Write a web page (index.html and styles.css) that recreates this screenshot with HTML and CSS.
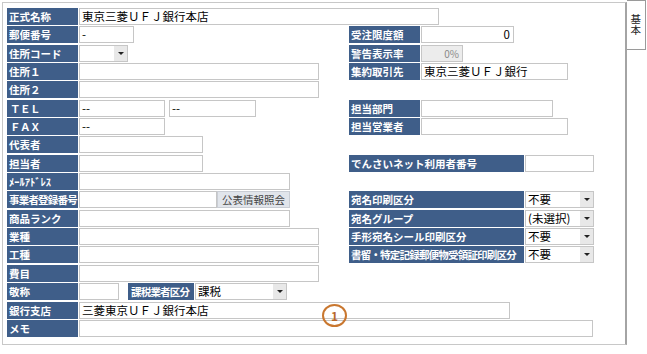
FILE: index.html
```html
<!DOCTYPE html>
<html lang="ja">
<head>
    <meta charset="UTF-8">
    <title>取引先登録 基本</title>
    <link rel="stylesheet" href="styles.css">
</head>
<body>
<div class="screen">
    <div class="panel">
        <div class="row">
            <div class="left full"><span class="lbl">正式名称</span><span class="fld w360">東京三菱ＵＦＪ銀行本店</span></div>
        </div>
        <div class="row">
            <div class="left"><span class="lbl">郵便番号</span><span class="fld w55">-</span></div>
            <div class="right"><span class="lbl">受注限度額</span><span class="fld w93 num">0</span></div>
        </div>
        <div class="row">
            <div class="left"><span class="lbl">住所コード</span><span class="fld sel w49"><span></span><span class="arr"></span></span></div>
            <div class="right"><span class="lbl">警告表示率</span><span class="fld w42 num ro">0%</span></div>
        </div>
        <div class="row">
            <div class="left"><span class="lbl">住所１</span><span class="fld w240"></span></div>
            <div class="right"><span class="lbl">集約取引先</span><span class="fld w147">東京三菱ＵＦＪ銀行</span></div>
        </div>
        <div class="row">
            <div class="left"><span class="lbl">住所２</span><span class="fld w240"></span></div>
        </div>
        <div class="row">
            <div class="left"><span class="lbl wide">ＴＥＬ</span><span class="fld w86">--</span><span class="fld w87 sp">--</span></div>
            <div class="right"><span class="lbl">担当部門</span><span class="fld w132"></span></div>
        </div>
        <div class="row">
            <div class="left"><span class="lbl wide">ＦＡＸ</span><span class="fld w86">--</span></div>
            <div class="right"><span class="lbl">担当営業者</span><span class="fld w147"></span></div>
        </div>
        <div class="row">
            <div class="left"><span class="lbl">代表者</span><span class="fld w124"></span></div>
        </div>
        <div class="row">
            <div class="left"><span class="lbl">担当者</span><span class="fld w124"></span></div>
            <div class="right"><span class="lbl long">でんさいネット利用者番号</span><span class="fld w69"></span></div>
        </div>
        <div class="row">
            <div class="left"><span class="lbl">ﾒｰﾙｱﾄﾞﾚｽ</span><span class="fld w211"></span></div>
        </div>
        <div class="row">
            <div class="left"><span class="lbl tight">事業者登録番号</span><span class="fld w138"></span><span class="btn">公表情報照会</span></div>
            <div class="right"><span class="lbl long">宛名印刷区分</span><span class="fld sel w69"><span>不要</span><span class="arr"></span></span></div>
        </div>
        <div class="row">
            <div class="left"><span class="lbl">商品ランク</span><span class="fld w211"></span></div>
            <div class="right"><span class="lbl long">宛名グループ</span><span class="fld sel w69"><span>(未選択)</span><span class="arr"></span></span></div>
        </div>
        <div class="row">
            <div class="left"><span class="lbl">業種</span><span class="fld w240"></span></div>
            <div class="right"><span class="lbl long">手形宛名シール印刷区分</span><span class="fld sel w69"><span>不要</span><span class="arr"></span></span></div>
        </div>
        <div class="row">
            <div class="left"><span class="lbl">工種</span><span class="fld w240"></span></div>
            <div class="right"><span class="lbl long tight">書留・特定記録郵便物受領証印刷区分</span><span class="fld sel w69"><span>不要</span><span class="arr"></span></span></div>
        </div>
        <div class="row">
            <div class="left"><span class="lbl">費目</span><span class="fld w240"></span></div>
        </div>
        <div class="row">
            <div class="left"><span class="lbl">敬称</span><span class="fld w40"></span><span class="lbl tax tight">課税業者区分</span><span class="fld sel w92"><span>課税</span><span class="arr"></span></span></div>
        </div>
        <div class="row">
            <div class="left full"><span class="lbl">銀行支店</span><span class="fld w431">三菱東京ＵＦＪ銀行本店</span></div>
        </div>
        <div class="row">
            <div class="left full"><span class="lbl">メモ</span><span class="fld w514"></span></div>
        </div>

        <span class="mark">1</span>
    </div>
    <div class="tab"><span class="tab-text">基本</span></div>
</div>
</body>
</html>
```

FILE: styles.css
```css
body {
    margin: 0;
    background: #fff;
    font-family: "Noto Sans CJK JP", "DejaVu Sans", sans-serif;
    color: #000;
}
.screen {
    display: flex;
    align-items: flex-start;
    padding: 2px 0 0 2px;
}
.panel {
    position: relative;
    width: 618px;
    border: 1px solid #c8c8c8;
    border-right: 2px solid #a4a4a4;
    padding: 5px 0 6px 4px;
}
.tab {
    margin-top: -2px;
    width: 19px;
    height: 50px;
    border: 1px solid #9a9a9a;
    border-left: none;
    box-sizing: border-box;
    padding-top: 12px;
    display: flex;
    justify-content: center;
}
.tab-text {
    width: 11px;
    font-size: 10.5px;
    line-height: 11px;
    word-break: break-all;
    color: #222;
}
.row {
    display: flex;
    height: 18.35px;
}
.left {
    display: flex;
    gap: 1px;
    flex: 0 0 342px;
}
.left.full {
    flex: none;
}
.right {
    display: flex;
    gap: 1px;
}
.lbl {
    flex-shrink: 0;
    box-sizing: border-box;
    width: 71px;
    height: 17px;
    padding-left: 2px;
    background: #3f5e89;
    color: #fff;
    font-size: 10.5px;
    font-weight: bold;
    line-height: 17px;
    white-space: nowrap;
    overflow: hidden;
}
.lbl.wide {
    padding-left: 3px;
    letter-spacing: -0.5px;
}
.lbl.tight {
    letter-spacing: -0.8px;
}
.lbl.long {
    width: 175px;
}
.lbl.tax {
    width: 66px;
    margin-left: 8px;
    padding-left: 3px;
}
.fld {
    flex-shrink: 0;
    box-sizing: border-box;
    height: 17px;
    border: 1px solid #c6c6c6;
    padding-left: 2px;
    font-size: 11.5px;
    line-height: 15px;
    white-space: nowrap;
    overflow: hidden;
}
.fld.sp {
    margin-left: 3px;
}
.fld.num {
    text-align: right;
    padding-right: 3px;
}
.fld.ro {
    background: #ececec;
    color: #8a8a8a;
    font-size: 10px;
}
.sel {
    display: flex;
    justify-content: space-between;
    padding-right: 0;
}
.arr {
    width: 13px;
    height: 15px;
    background: #e8e8e8;
    display: flex;
    align-items: center;
    justify-content: center;
}
.arr::after {
    content: "";
    border-left: 3px solid transparent;
    border-right: 3px solid transparent;
    border-top: 3px solid #222;
}
.btn {
    flex-shrink: 0;
    box-sizing: border-box;
    width: 73px;
    height: 17px;
    background: #e1e5eb;
    border: 1px solid #c9cdd4;
    color: #444;
    font-size: 10.5px;
    line-height: 15px;
    text-align: center;
    margin-left: -1px;
}
.w40 { width: 40px; }
.w42 { width: 42px; }
.w49 { width: 49px; }
.w55 { width: 55px; }
.w69 { width: 69px; }
.w86 { width: 86px; }
.w87 { width: 87px; }
.w92 { width: 92px; }
.w93 { width: 93px; }
.w124 { width: 124px; }
.w132 { width: 132px; }
.w138 { width: 138px; }
.w147 { width: 147px; }
.w211 { width: 211px; }
.w240 { width: 240px; }
.w360 { width: 360px; }
.w431 { width: 431px; }
.w514 { width: 514px; }

/* annotation marker */
.mark {
    position: absolute;
    left: 319px;
    top: 301px;
    width: 25px;
    height: 23px;
    box-sizing: border-box;
    border: 2px solid #c9772f;
    border-radius: 50%;
    color: #b8692a;
    font-size: 12px;
    font-weight: bold;
    line-height: 19px;
    text-align: center;
}
```
